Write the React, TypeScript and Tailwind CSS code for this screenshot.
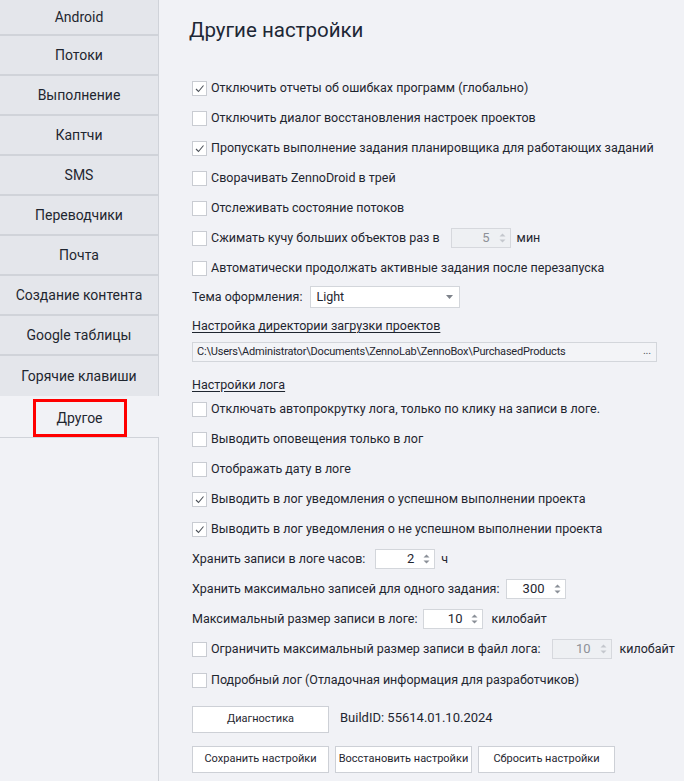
import type { ReactNode } from "react"

const NAV = [
  "Android",
  "Потоки",
  "Выполнение",
  "Каптчи",
  "SMS",
  "Переводчики",
  "Почта",
  "Создание контента",
  "Google таблицы",
  "Горячие клавиши",
]

function Check({ checked = false }: { checked?: boolean }) {
  return (
    <span className="w-[15px] h-[15px] shrink-0 border border-[#c9ccd2] bg-white flex items-center justify-center">
      {checked && (
        <svg width="13" height="13" viewBox="0 0 13 13">
          <polyline points="3,7 5.5,9.5 10.5,3.5" fill="none" stroke="#4b5058" strokeWidth="1.1" />
        </svg>
      )}
    </span>
  )
}

function Arrows({ dim = false }: { dim?: boolean }) {
  const c = dim ? "#c4c7cd" : "#8a8f97"
  return (
    <svg width="7" height="12" viewBox="0 0 7 12" className="shrink-0">
      <polygon points="0.5,4.5 3.5,1.5 6.5,4.5" fill={c} />
      <polygon points="0.5,7.5 3.5,10.5 6.5,7.5" fill={c} />
    </svg>
  )
}

function Spin({ value, dim = false }: { value: string; dim?: boolean }) {
  return (
    <span
      className={`w-[60px] h-[20px] border flex items-center justify-end pr-[4px] gap-[9px] text-[13px] ${
        dim ? "bg-[#eef0f3] border-[#d6d8dd] text-[#8d9198]" : "bg-white border-[#d3d6db]"
      }`}
    >
      <span>{value}</span>
      <Arrows dim={dim} />
    </span>
  )
}

function Row({ children, h = "h-[30px]" }: { children: ReactNode; h?: string }) {
  return <div className={`${h} flex items-center whitespace-nowrap`}>{children}</div>
}

function CheckRow({ label, checked = false }: { label: string; checked?: boolean }) {
  return (
    <Row>
      <Check checked={checked} />
      <span className="ml-[4px]">{label}</span>
    </Row>
  )
}

function Btn({ children }: { children: ReactNode }) {
  return (
    <button className="w-[137px] h-[27px] bg-white border border-[#cdd0d6] text-[11px] text-[#1f2630] whitespace-nowrap">
      {children}
    </button>
  )
}

export default function App() {
  return (
    <div
      className="w-[684px] h-[781px] overflow-hidden flex bg-[#f1f2f6] text-[#1f2630] text-[12.5px]"
      style={{ fontFamily: 'Roboto, "Noto Sans", sans-serif' }}
    >
      {/* sidebar */}
      <aside className="w-[159px] shrink-0 flex flex-col text-[14px]">
        {NAV.map((n, i) => (
          <div
            key={n}
            className={`${i === 0 ? "h-[36px]" : "h-[40px]"} ${
              i === NAV.length - 1 ? "" : "border-b-2"
            } border-[#d0d3d9] bg-[#e4e6eb] border-r border-r-[#d0d3d9] flex items-center justify-center`}
          >
            {n}
          </div>
        ))}
        <div className="h-[41px] pt-[3px] flex justify-center">
          <span className="w-[94px] h-[38px] border-[3px] border-[#ff0000] flex items-center justify-center">
            Другое
          </span>
        </div>
        <div className="flex-1 border-t border-r border-[#d0d3d9]" />
      </aside>

      {/* content */}
      <main className="flex-1 pl-[30px] pt-[16px]">
        <h1 className="text-[20.5px] leading-[28px] text-[#1d2735]">Другие настройки</h1>
        <div className="pl-[3px] mt-[29px]">
          <CheckRow checked label="Отключить отчеты об ошибках программ (глобально)" />
          <CheckRow label="Отключить диалог восстановления настроек проектов" />
          <CheckRow checked label="Пропускать выполнение задания планировщика для работающих заданий" />
          <CheckRow label="Сворачивать ZennoDroid в трей" />
          <CheckRow label="Отслеживать состояние потоков" />
          <Row>
            <Check />
            <span className="ml-[4px]">Сжимать кучу больших объектов раз в</span>
            <span className="ml-[11px]">
              <Spin value="5" dim />
            </span>
            <span className="ml-[6px]">мин</span>
          </Row>
          <CheckRow label="Автоматически продолжать активные задания после перезапуска" />
          <Row h="h-[28px]">
            <span>Тема оформления:</span>
            <span className="ml-[8px] w-[150px] h-[22px] bg-white border border-[#d3d6db] flex items-center justify-between pl-[5px] pr-[6px]">
              <span>Light</span>
              <svg width="7" height="4" viewBox="0 0 7 4">
                <polygon points="0,0 7,0 3.5,4" fill="#7d828a" />
              </svg>
            </span>
          </Row>
          <Row h="h-[31px]">
            <span className="underline underline-offset-2">Настройка директории загрузки проектов</span>
          </Row>
          <div className="w-[465px] h-[20px] border border-[#d3d6db] bg-[#f3f4f7] flex items-center justify-between pl-[4px] pr-[5px] text-[11px] tracking-[-0.2px] whitespace-nowrap">
            <span>C:\Users\Administrator\Documents\ZennoLab\ZennoBox\PurchasedProducts</span>
            <span className="text-[#555a62] leading-none pb-[4px]">...</span>
          </div>
          <div className="mt-[14px] h-[18px] flex items-center">
            <span className="underline underline-offset-2">Настройки лога</span>
          </div>
          <CheckRow label="Отключать автопрокрутку лога, только по клику на записи в логе." />
          <CheckRow label="Выводить оповещения только в лог" />
          <CheckRow label="Отображать дату в логе" />
          <CheckRow checked label="Выводить в лог уведомления о успешном выполнении проекта" />
          <CheckRow checked label="Выводить в лог уведомления о не успешном выполнении проекта" />
          <Row>
            <span>Хранить записи в логе часов:</span>
            <span className="ml-[10px]">
              <Spin value="2" />
            </span>
            <span className="ml-[6px]">ч</span>
          </Row>
          <Row>
            <span>Хранить максимально записей для одного задания:</span>
            <span className="ml-[6px]">
              <Spin value="300" />
            </span>
          </Row>
          <Row>
            <span>Максимальный размер записи в логе:</span>
            <span className="ml-[6px]">
              <Spin value="10" />
            </span>
            <span className="ml-[8px]">килобайт</span>
          </Row>
          <Row>
            <Check />
            <span className="ml-[4px]">Ограничить максимальный размер записи в файл лога:</span>
            <span className="ml-[11px]">
              <Spin value="10" dim />
            </span>
            <span className="ml-[8px]">килобайт</span>
          </Row>
          <Row h="h-[32px]">
            <Check />
            <span className="ml-[4px]">Подробный лог (Отладочная информация для разработчиков)</span>
          </Row>
          <div className="mt-[10px] flex items-center">
            <Btn>Диагностика</Btn>
            <span className="ml-[11px] pb-[3px] text-[13px]">BuildID: 55614.01.10.2024</span>
          </div>
          <div className="mt-[13px] flex gap-[6px]">
            <Btn>Сохранить настройки</Btn>
            <Btn>Восстановить настройки</Btn>
            <Btn>Сбросить настройки</Btn>
          </div>
        </div>
      </main>
    </div>
  )
}
